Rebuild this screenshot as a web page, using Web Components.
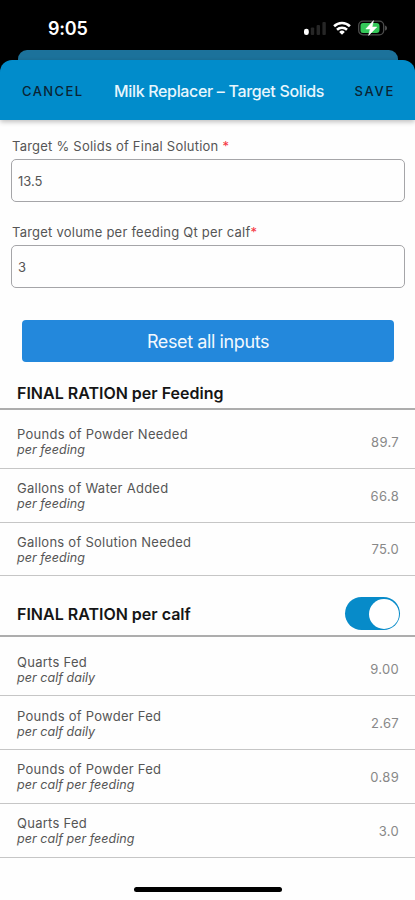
<!DOCTYPE html>
<html lang="en">
<head>
<meta charset="utf-8">
<meta name="viewport" content="width=device-width, initial-scale=1">
<title>Milk Replacer – Target Solids</title>
<style>
    html, body {
        margin: 0;
        background: #ffffff;
    }

    body {
        width: 415px;
        height: 900px;
        overflow: hidden;
        font-family: Inter, "Liberation Sans", sans-serif;
        color: #555555;
    }
</style>
</head>
<body>
<calf-app></calf-app>

<script>
/**
 * Base class: puts the template of the component into an open shadow root
 */
class BaseElement extends HTMLElement {
    connectedCallback() {
        if (this.shadowRoot) return;
        const template = document.createElement('template');
        template.innerHTML = this.render();
        this.attachShadow({ mode: 'open' }).append(template.content.cloneNode(true));
    }
}

class StatusBar extends BaseElement {
    render() {
        return `
            <style>
                :host {
                    display: flex;
                    justify-content: space-between;
                    align-items: center;
                    box-sizing: border-box;
                    height: 50px;
                    padding: 7px 27px 0 48px;
                    color: #ffffff;
                    font-size: 18px;
                    font-weight: 600;
                }

                .time {
                    letter-spacing: -0.2px;
                }

                .icons {
                    display: flex;
                    align-items: center;
                    gap: 6px;
                    margin-top: -1px;
                }

                svg {
                    display: block;
                }
            </style>
            <span class="time">9:05</span>
            <div class="icons">
                <svg width="23" height="14" viewBox="0 0 23 14">
                    <rect x="0" y="7.8" width="4.8" height="6.2" rx="2.3" fill="#fff"/>
                    <rect x="6.8" y="6.5" width="3.4" height="7.5" rx="1" fill="#262626"/>
                    <rect x="12.6" y="4" width="3.4" height="10" rx="1" fill="#262626"/>
                    <rect x="18.4" y="1" width="3.4" height="13" rx="1" fill="#262626"/>
                </svg>
                <svg width="18" height="14" viewBox="0 0 18 14" fill="none" stroke="#fff" stroke-width="2.6">
                    <path d="M1.1 5.2a11.4 11.4 0 0 1 15.8 0"/>
                    <path d="M4 8.7a7.3 7.3 0 0 1 10 0"/>
                    <path d="M9 13.8 6.2 10.9a4 4 0 0 1 5.6 0z" fill="#fff" stroke="none"/>
                </svg>
                <svg width="31" height="16" viewBox="0 0 31 16">
                    <rect x="1.7" y="1.2" width="25" height="13.6" rx="4.3" fill="#000" stroke="#4c4c4c" stroke-width="1.3"/>
                    <path d="M28.2 5.4c2.2.9 2.2 4.3 0 5.200z" fill="#5e5e5e"/>
                    <path d="M6 3h13.500a3 3 0 0 1 3 3v4a3 3 0 0 1-3 3H6a2.500 2.500 0 0 1-2.500-2.500v-5A2.500 2.500 0 0 1 6 3z" fill="#34c759"/>
                    <path d="M16.500.6 8.800 9h4.400l-1.600 6.400L19.900 7h-4.800z" fill="#fff" stroke="#fff" stroke-width=".5"/>
                </svg>
            </div>
        `;
    }
}

class SheetHeader extends BaseElement {
    render() {
        return `
            <style>
                :host {
                    display: block;
                    color: #0b2434;
                }

                .behind {
                    height: 10px;
                    margin: 0 17px 0 18px;
                    border-radius: 9px 9px 0 0;
                    background: #1c729b;
                }

                .bar {
                    display: grid;
                    grid-template-columns: 92px 1fr 92px;
                    align-items: center;
                    box-sizing: border-box;
                    height: 60px;
                    padding-top: 1px;
                    border-radius: 12px 12px 0 0;
                    background: #018ccb;
                    box-shadow: 0 2px 5px rgba(0, 0, 0, 0.25);
                }

                .cancel, .save {
                    font-size: 13px;
                    font-weight: 500;
                    letter-spacing: 1.4px;
                }

                .cancel {
                    padding-left: 22px;
                }

                .save {
                    padding-right: 20px;
                    text-align: right;
                    letter-spacing: 1.7px;
                }

                .title {
                    margin: 0 -20px;
                    padding-left: 23px;
                    text-align: center;
                    white-space: nowrap;
                    font-size: 16px;
                    font-weight: 500;
                    letter-spacing: -0.33px;
                    color: #e8f6fd;
                }
            </style>
            <div class="behind"></div>
            <div class="bar">
                <span class="cancel">CANCEL</span>
                <span class="title"><slot></slot></span>
                <span class="save">SAVE</span>
            </div>
        `;
    }
}

class FormField extends BaseElement {
    render() {
        return `
            <style>
                :host {
                    display: block;
                    height: 86px;
                    margin: 0 10px 0 11px;
                }

                .label {
                    height: 28px;
                    line-height: 30px;
                    padding-left: 1px;
                    font-size: 13px;
                    letter-spacing: 0.23px;
                    white-space: pre;
                }

                .required {
                    color: #f5333f;
                }

                .input {
                    display: flex;
                    align-items: center;
                    box-sizing: border-box;
                    height: 43px;
                    padding: 1px 6px 0;
                    border: 1px solid #a5a5a8;
                    border-radius: 5px;
                    font-size: 13px;
                }
            </style>
            <div class="label"><slot></slot><span class="required">*</span></div>
            <div class="input">${this.getAttribute('value')}</div>
        `;
    }
}

class ResetButton extends BaseElement {
    render() {
        return `
            <style>
                :host {
                    display: flex;
                    align-items: center;
                    justify-content: center;
                    height: 42px;
                    margin: 0 21px 0 22px;
                    border-radius: 4px;
                    background: #2388dc;
                    color: #f1f8fe;
                    font-size: 18px;
                    letter-spacing: -0.4px;
                }
            </style>
            <slot></slot>
        `;
    }
}

class RationSection extends BaseElement {
    render() {
        return `
            <style>
                :host {
                    display: block;
                }

                .heading {
                    display: flex;
                    align-items: center;
                    justify-content: space-between;
                    box-sizing: border-box;
                    height: var(--heading-height, 48px);
                    padding: 16px 15px 0 17px;
                    border-bottom: 2px solid #adadad;
                    color: #151515;
                    font-size: 16px;
                    font-weight: 600;
                }

                .rows {
                    padding-top: 5px;
                }
            </style>
            <div class="heading">
                <slot name="title"></slot>
                <slot name="action"></slot>
            </div>
            <div class="rows"><slot></slot></div>
        `;
    }
}

class RationRow extends BaseElement {
    render() {
        return `
            <style>
                :host {
                    display: flex;
                    align-items: center;
                    justify-content: space-between;
                    box-sizing: border-box;
                    height: 53.8px;
                    padding: 1px 16px 0 17px;
                    border-bottom: 1px solid #c6c6c6;
                    font-size: 13px;
                    line-height: 16px;
                }

                .text {
                    padding-top: 1px;
                }

                .name {
                    letter-spacing: 0.26px;
                }

                .note {
                    font-size: 12.5px;
                    font-style: italic;
                    letter-spacing: 0.04px;
                }

                .value {
                    color: #888888;
                    letter-spacing: 0.3px;
                }
            </style>
            <div class="text">
                <div class="name"><slot></slot></div>
                <div class="note">${this.getAttribute('note')}</div>
            </div>
            <span class="value">${this.getAttribute('value')}</span>
        `;
    }
}

class ToggleSwitch extends BaseElement {
    render() {
        return `
            <style>
                :host {
                    display: flex;
                    justify-content: flex-end;
                    box-sizing: border-box;
                    width: 55px;
                    height: 33px;
                    padding: 1.5px;
                    border-radius: 17px;
                    background: #078bc9;
                }

                .knob {
                    width: 30px;
                    height: 30px;
                    border-radius: 50%;
                    background: #ffffff;
                }
            </style>
            <div class="knob"></div>
        `;
    }
}

class CalfApp extends BaseElement {
    render() {
        return `
            <style>
                :host {
                    display: flex;
                    flex-direction: column;
                    height: 900px;
                    background: linear-gradient(#000 0 76px, #fefefe 76px);
                }

                .form {
                    box-sizing: border-box;
                    padding-top: 11px;
                    height: 200px;
                }

                .calf {
                    --heading-height: 61px;
                }

                .home {
                    width: 148px;
                    height: 5px;
                    margin: 29px auto 0 134px;
                    border-radius: 3px;
                    background: #000000;
                }
            </style>
            <status-bar></status-bar>
            <sheet-header>Milk Replacer – Target Solids</sheet-header>
            <div class="form">
                <form-field value="13.5">Target % Solids of Final Solution </form-field>
                <form-field value="3">Target volume per feeding Qt per calf</form-field>
            </div>
            <reset-button>Reset all inputs</reset-button>
            <ration-section>
                <span slot="title">FINAL RATION per Feeding</span>
                <ration-row note="per feeding" value="89.7">Pounds of Powder Needed</ration-row>
                <ration-row note="per feeding" value="66.8">Gallons of Water Added</ration-row>
                <ration-row note="per feeding" value="75.0">Gallons of Solution Needed</ration-row>
            </ration-section>
            <ration-section class="calf">
                <span slot="title">FINAL RATION per calf</span>
                <toggle-switch slot="action"></toggle-switch>
                <ration-row note="per calf daily" value="9.00">Quarts Fed</ration-row>
                <ration-row note="per calf daily" value="2.67">Pounds of Powder Fed</ration-row>
                <ration-row note="per calf per feeding" value="0.89">Pounds of Powder Fed</ration-row>
                <ration-row note="per calf per feeding" value="3.0">Quarts Fed</ration-row>
            </ration-section>
            <div class="home"></div>
        `;
    }
}

customElements.define('status-bar', StatusBar);
customElements.define('sheet-header', SheetHeader);
customElements.define('form-field', FormField);
customElements.define('reset-button', ResetButton);
customElements.define('ration-section', RationSection);
customElements.define('ration-row', RationRow);
customElements.define('toggle-switch', ToggleSwitch);
customElements.define('calf-app', CalfApp);
</script>
</body>
</html>
